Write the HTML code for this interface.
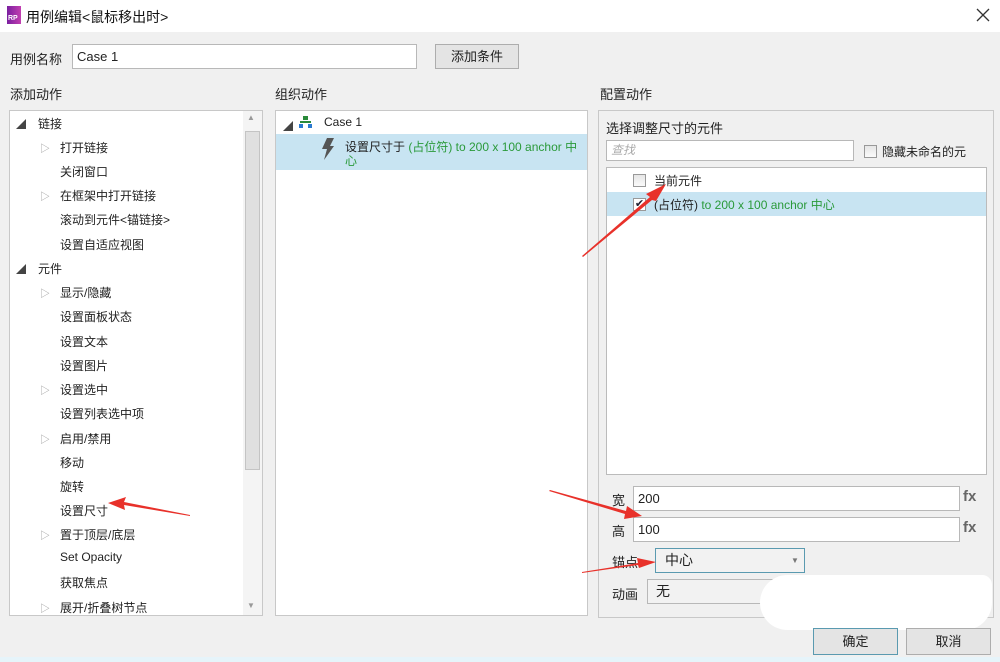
<!DOCTYPE html>
<html><head><meta charset="utf-8"><style>
*{margin:0;padding:0;box-sizing:border-box}
body{width:1000px;height:662px;background:#f0f0f0;font-family:"Liberation Sans","Noto Sans CJK SC",sans-serif;font-size:12px;color:#222;position:relative;overflow:hidden}
.a{position:absolute;white-space:nowrap}
.box{position:absolute;background:#fff;border:1px solid #c8c8c8}
.inp{position:absolute;background:#fff;border:1px solid #b8b8b8;padding-left:4px;line-height:23px;font-size:13px}
.btn{position:absolute;background:#e4e4e4;border:1px solid #adadad;text-align:center;font-size:13px}
.tri{position:absolute;color:#999;font-size:10px}
.g{color:#2a9a3a}
.cb{position:absolute;width:13px;height:13px;border:1px solid #999;background:linear-gradient(#e6e6e6,#fafafa)}
</style></head><body>
<div class="a" style="left:0;top:0;width:1000px;height:32px;background:#fff"></div>
<div class="a" style="left:7px;top:6px;width:14px;height:18px;background:linear-gradient(90deg,#7a1fa0,#c23fb0)"><span style="position:absolute;left:1px;top:9px;color:#fff;font-size:7px;font-weight:bold">RP</span></div>
<div class="a" style="left:26px;top:7px;font-size:14px;color:#111">用例编辑&lt;鼠标移出时&gt;</div>
<svg class="a" style="left:976px;top:8px" width="14" height="14"><path d="M1 1L13 13M13 1L1 13" stroke="#333" stroke-width="1.3"/></svg>

<div class="a" style="left:10px;top:49px;font-size:13px">用例名称</div>
<div class="inp" style="left:72px;top:44px;width:345px;height:25px">Case 1</div>
<div class="btn" style="left:435px;top:44px;width:84px;height:25px;line-height:23px">添加条件</div>

<div class="a" style="left:10px;top:84px;font-size:13px">添加动作</div>
<div class="a" style="left:275px;top:84px;font-size:13px">组织动作</div>
<div class="a" style="left:600px;top:84px;font-size:13px">配置动作</div>

<div class="box" style="left:9px;top:110px;width:254px;height:506px"></div>
<div class="a" style="left:243px;top:111px;width:19px;height:504px;background:#f4f4f4"></div>
<div class="a" style="left:245px;top:131px;width:15px;height:339px;background:#e0e0e0;border:1px solid #c4c4c4"></div>
<div class="a" style="left:247px;top:113px;font-size:8px;color:#999">▲</div>
<div class="a" style="left:247px;top:601px;font-size:8px;color:#999">▼</div>
<div style="position:absolute;left:0;top:0;font-size:12px">
<div class="tri" style="left:16px;top:116px;color:#444">◢</div><div class="a" style="left:38px;top:115px">链接</div>
<div class="tri" style="left:40px;top:140px">▷</div><div class="a" style="left:60px;top:139px">打开链接</div>
<div class="a" style="left:60px;top:163px">关闭窗口</div>
<div class="tri" style="left:40px;top:188px">▷</div><div class="a" style="left:60px;top:187px">在框架中打开链接</div>
<div class="a" style="left:60px;top:211px">滚动到元件&lt;锚链接&gt;</div>
<div class="a" style="left:60px;top:236px">设置自适应视图</div>
<div class="tri" style="left:16px;top:261px;color:#444">◢</div><div class="a" style="left:38px;top:260px">元件</div>
<div class="tri" style="left:40px;top:285px">▷</div><div class="a" style="left:60px;top:284px">显示/隐藏</div>
<div class="a" style="left:60px;top:308px">设置面板状态</div>
<div class="a" style="left:60px;top:333px">设置文本</div>
<div class="a" style="left:60px;top:357px">设置图片</div>
<div class="tri" style="left:40px;top:382px">▷</div><div class="a" style="left:60px;top:381px">设置选中</div>
<div class="a" style="left:60px;top:405px">设置列表选中项</div>
<div class="tri" style="left:40px;top:431px">▷</div><div class="a" style="left:60px;top:430px">启用/禁用</div>
<div class="a" style="left:60px;top:454px">移动</div>
<div class="a" style="left:60px;top:478px">旋转</div>
<div class="a" style="left:60px;top:502px">设置尺寸</div>
<div class="tri" style="left:40px;top:527px">▷</div><div class="a" style="left:60px;top:526px">置于顶层/底层</div>
<div class="a" style="left:60px;top:550px">Set Opacity</div>
<div class="a" style="left:60px;top:574px">获取焦点</div>
<div class="tri" style="left:40px;top:600px">▷</div><div class="a" style="left:60px;top:599px">展开/折叠树节点</div>
</div>

<div class="box" style="left:275px;top:110px;width:313px;height:506px"></div>
<div class="tri" style="left:283px;top:118px;color:#444">◢</div>
<div class="a" style="left:299px;top:116px;width:13px;height:13px"><div style="position:absolute;left:4px;top:0;width:5px;height:4px;background:#2a8a3a"></div><div style="position:absolute;left:1px;top:5px;width:11px;height:2px;background:#2a8a3a"></div><div style="position:absolute;left:0;top:8px;width:4px;height:4px;background:#2a7ad0"></div><div style="position:absolute;left:9px;top:8px;width:4px;height:4px;background:#2a7ad0"></div></div>
<div class="a" style="left:324px;top:115px">Case 1</div>
<div class="a" style="left:276px;top:134px;width:311px;height:36px;background:#c8e4f2"></div>
<svg class="a" style="left:320px;top:138px" width="16" height="22"><path d="M7 0H14L10 8H14L4 22L7 11H2Z" fill="#555"/></svg>
<div class="a" style="left:345px;top:140px;line-height:14px">设置尺寸于 <span class="g">(占位符) to 200 x 100 anchor 中<br>心</span></div>

<div class="box" style="left:598px;top:110px;width:396px;height:508px;background:#f0f0f0"></div>
<div class="a" style="left:606px;top:118px;font-size:13px">选择调整尺寸的元件</div>
<div class="inp" style="left:606px;top:140px;width:248px;height:21px;line-height:19px;color:#aaa;font-style:italic;font-size:12px">查找</div>
<div class="cb" style="left:864px;top:145px"></div>
<div class="a" style="left:882px;top:143px">隐藏未命名的元</div>
<div class="box" style="left:606px;top:167px;width:381px;height:308px;border-color:#bbb"></div>
<div class="cb" style="left:633px;top:174px"></div>
<div class="a" style="left:654px;top:172px">当前元件</div>
<div class="a" style="left:607px;top:192px;width:379px;height:24px;background:#c8e4f2"></div>
<div class="cb" style="left:633px;top:198px;background:#fff;font-size:11px;line-height:11px;color:#223;text-align:center">✔</div>
<div class="a" style="left:654px;top:196px">(占位符) <span class="g">to 200 x 100 anchor 中心</span></div>

<div class="a" style="left:612px;top:490px;font-size:13px">宽</div>
<div class="inp" style="left:633px;top:486px;width:327px;height:25px">200</div>
<div class="a" style="left:963px;top:488px;font-size:15px;font-weight:bold;color:#666">fx</div>
<div class="a" style="left:612px;top:521px;font-size:13px">高</div>
<div class="inp" style="left:633px;top:517px;width:327px;height:25px">100</div>
<div class="a" style="left:963px;top:519px;font-size:15px;font-weight:bold;color:#666">fx</div>
<div class="a" style="left:612px;top:552px;font-size:13px">锚点</div>
<div class="inp" style="left:655px;top:548px;width:150px;height:25px;border-color:#5a9ab0;background:#f2f2f2;padding-left:9px;font-size:14px">中心</div>
<div class="a" style="left:791px;top:556px;font-size:8px;color:#777">▼</div>
<div class="a" style="left:612px;top:584px;font-size:13px">动画</div>
<div class="inp" style="left:647px;top:579px;width:150px;height:25px;background:#f2f2f2;padding-left:8px;font-size:14px">无</div>
<div class="a" style="left:760px;top:575px;width:232px;height:55px;background:#fff;border-radius:28px 10px 28px 28px"></div>

<div class="btn" style="left:813px;top:628px;width:85px;height:27px;line-height:25px;border-color:#5a9ab0">确定</div>
<div class="btn" style="left:906px;top:628px;width:85px;height:27px;line-height:25px">取消</div>
<div class="a" style="left:0;top:657px;width:1000px;height:5px;background:#e6f4fa"></div>

<svg class="a" style="left:0;top:0" width="1000" height="662">
<g fill="#e8312a">
<polygon points="190,516 124,505 125,510 108,503 126,497 124,502 190,515"/>
<polygon points="582,256 650,197 646,194 666,184 656,201 652,200 583,257"/>
<polygon points="550,490 626,511 627,506 642,516 624,519 625,514 549,491"/>
<polygon points="582,572 638,563 637,558 656,562 639,568 638,565 582,573"/>
</g>
</svg>
</body></html>
